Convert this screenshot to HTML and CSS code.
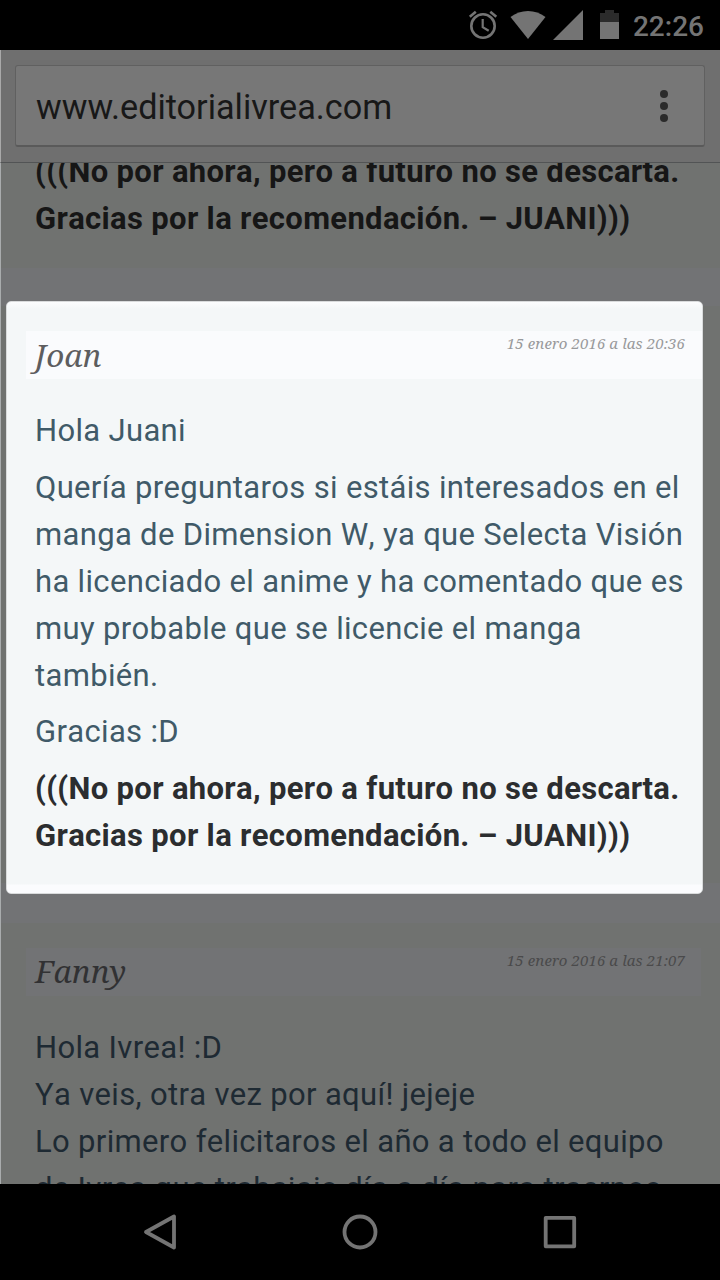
FILE: index.html
```
<!DOCTYPE html>
<html lang="es">
<head>
  <meta charset="UTF-8">
  <meta name="viewport" content="width=device-width, initial-scale=1.0">
  <title>www.editorialivrea.com</title>
  <link rel="stylesheet" href="styles.css">
</head>
<body>

  <!-- Barra de estado -->
  <header class="status-bar">
    <svg class="status-icons" width="160" height="50" viewBox="0 0 160 50">
      <g fill="none" stroke="#747474" stroke-width="2.6">
        <circle cx="23" cy="26" r="11.7"/>
        <path d="M22.7 19v8.2l6 3.6" stroke-width="2.2"/>
        <path d="M9.8 16.8l6-5M30.3 11.8l6 5"/>
      </g>
      <g fill="#747474">
        <path d="M68 39L50.5 17C60.5 9 75.500 9 85.500 17z"/>
        <path d="M93 40L123 10V40z"/>
        <path d="M140 22h19v17h-19z"/>
      </g>
      <path d="M140 22v-9h5v-3h9v3h5v9z" fill="#2b2b2b"/>
    </svg>
    <span class="clock">22:26</span>
  </header>

  <!-- Barra de direcciones -->
  <div class="toolbar">
    <div class="address">
      <span class="url">www.editorialivrea.com</span>
      <svg width="8" height="32" viewBox="0 0 8 32" fill="#2b2b2b">
        <circle cx="4" cy="4" r="4"/>
        <circle cx="4" cy="16" r="4"/>
        <circle cx="4" cy="28" r="4"/>
      </svg>
    </div>
  </div>

  <!-- Comentarios -->
  <main class="content">
    <div class="comment first">
      <p class="reply">(((No por ahora, pero a futuro no se descarta.<br>Gracias por la recomendación. – JUANI)))</p>
    </div>

    <div class="slot">
      <div class="card">
        <div class="comment-head">
          <span class="author">Joan</span>
          <span class="date">15 enero 2016 a las 20:36</span>
        </div>
        <div class="text">
          <p>Hola Juani</p>
          <p>Quería preguntaros si estáis interesados en el<br>manga de Dimension W, ya que Selecta Visión<br>ha licenciado el anime y ha comentado que es<br>muy probable que se licencie el manga<br>también.</p>
          <p>Gracias :D</p>
          <p class="reply">(((No por ahora, pero a futuro no se descarta.<br>Gracias por la recomendación. – JUANI)))</p>
        </div>
      </div>
    </div>

    <div class="comment next">
      <div class="comment-head">
        <span class="author">Fanny</span>
        <span class="date">15 enero 2016 a las 21:07</span>
      </div>
      <div class="text">
        <p>Hola Ivrea! :D<br>Ya veis, otra vez por aquí! jejeje<br>Lo primero felicitaros el año a todo el equipo<br>de Ivrea que trabajais día a día para traernos</p>
      </div>
    </div>
  </main>

  <!-- Botones de navegación -->
  <nav class="nav-bar">
    <svg width="40" height="40" viewBox="0 0 40 40"><path d="M34 4.500V35.500L6 20z"/></svg>
    <svg width="40" height="40" viewBox="0 0 40 40"><circle cx="20" cy="20" r="15.500"/></svg>
    <svg width="40" height="40" viewBox="0 0 40 40"><rect x="5.700" y="5.800" width="28.500" height="28.500"/></svg>
  </nav>

</body>
</html>
```
FILE: styles.css
```
* {
  box-sizing: border-box;
}
body {
  margin: 0;
  width: 720px;
  height: 1280px;
  overflow: hidden;
  display: flex;
  flex-direction: column;
  background-color: #000;
  font-family: Roboto, sans-serif;
}
p {
  margin: 0;
}
.status-bar {
  height: 50px;
  display: flex;
  justify-content: flex-end;
  align-items: center;
  padding-right: 16px;
}
.status-icons {
  margin-right: 13px;
}
.clock {
  font-size: 28px;
  font-weight: 500;
  line-height: 50px;
  padding-top: 4px;
  color: #747474;
}
.toolbar {
  height: 113px;
  flex: none;
  padding: 15px;
  background-color: #6f6f6f;
  border-left: 1px solid #a9a9a9;
  border-bottom: 1px solid #525455;
}
.address {
  height: 82px;
  display: flex;
  justify-content: space-between;
  align-items: center;
  padding: 0 36px 0 20px;
  margin-left: -1px;
  background-color: #777;
  border: 1px solid #606060;
  border-bottom: 2px solid #5a5a5a;
  border-radius: 3px;
  font-size: 34.2px;
  color: #181818;
}
.url {
  padding-top: 3px;
}
.content {
  height: 1021px;
  flex: none;
  overflow: hidden;
  display: flex;
  flex-direction: column;
  background-color: #727375;
  border-left: 1px solid #a9acad;
}
.comment {
  flex: none;
  background-color: #707270;
}
.first {
  height: 105px;
  padding-left: 34px;
}
.first .reply {
  margin-top: -15px;
  color: #161616;
}
.text, .reply {
  font-size: 31px;
  line-height: 47px;
  letter-spacing: 0.33px;
  font-kerning: none;
  white-space: nowrap;
}
.text {
  padding: 28px 0 0 9px;
  color: #405a68;
}
.text p + p {
  margin-top: 9.600px;
}
.reply {
  font-weight: bold;
  color: #2b2d2f;
}
.slot {
  flex: none;
  display: flex;
  height: 577px;
  margin-top: 38px;
  padding-left: 5px;
  background-color: #707270;
}
.card {
  width: 697px;
  height: 593px;
  margin-top: -5px;
  padding: 29px 0 0 19px;
  background: linear-gradient(#fcfdfe 0, #f4f7f8 7px, #f4f7f8 582px, #fbfcfe 583px);
  border: 1px solid #d9dbdc;
  border-radius: 5px;
}
.comment-head {
  height: 48px;
  display: flex;
  justify-content: space-between;
  padding: 0 16px 0 9px;
  background-color: #fafbfd;
  font-family: "Noto Serif", "DejaVu Serif Condensed", "DejaVu Serif", serif;
  font-style: italic;
}
.card .comment-head {
  padding-right: 17px;
}
.author {
  font-size: 31.5px;
  line-height: 45px;
  font-kerning: none;
  color: #5d5d5f;
}
.card .author {
  line-height: 47px;
}
.date {
  font-size: 15px;
  line-height: 24px;
  letter-spacing: 0.1px;
  color: #98999b;
}
.next {
  height: 300px;
  margin-top: 40px;
  padding: 25px 19px 0 25px;
}
.next .comment-head {
  background-color: #727375;
}
.next .author {
  color: #313133;
}
.next .date {
  color: #4a4a4b;
}
.next .text {
  color: #1e2a33;
}
.nav-bar {
  height: 96px;
  display: flex;
  justify-content: center;
  align-items: center;
  gap: 160px;
}
.nav-bar svg {
  fill: none;
  stroke: #747474;
  stroke-width: 3.800;
  stroke-linejoin: round;
}
```
